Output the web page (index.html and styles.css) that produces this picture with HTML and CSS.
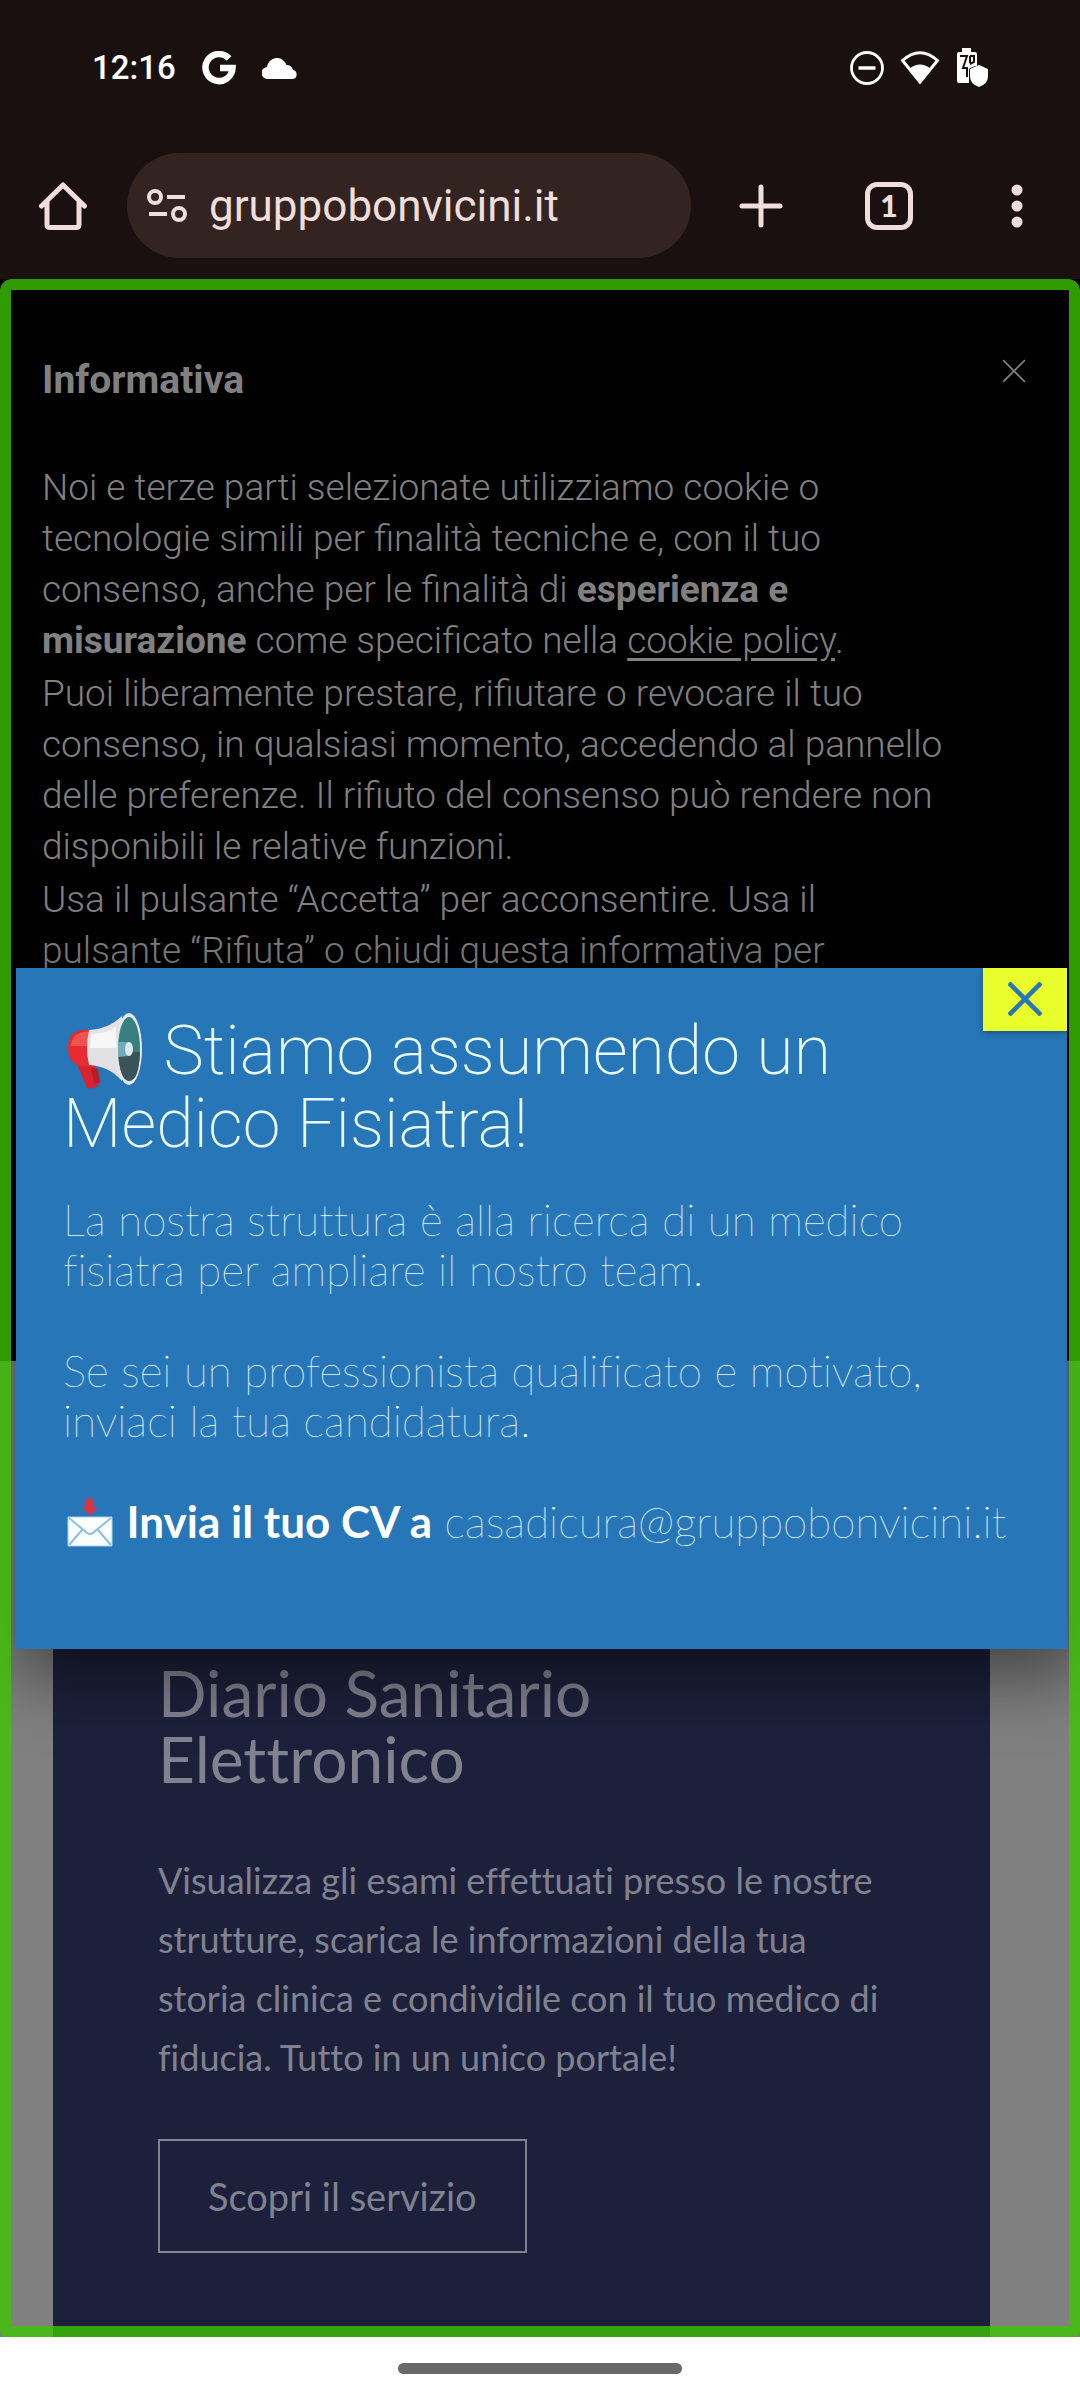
FILE: index.html
```
<!DOCTYPE html>
<html lang="it">
<head>
<meta charset="utf-8">
<meta name="viewport" content="width=device-width, initial-scale=1">
<title>Gruppo Bonvicini</title>
<link rel="stylesheet" href="styles.css">
</head>
<body>
<div class="phone">
  <header class="chrome">
    <div class="status">
      <div class="status-group">
        <time class="clock">12:16</time>
        <svg class="icon-g" viewBox="0 0 34 34" aria-hidden="true"><path d="M27 7.500A13.500 13.500 0 1 0 30.500 17H18" fill="none" stroke="#fff" stroke-width="6.500"/></svg>
        <svg class="icon-cloud" viewBox="0 0 36 21" aria-hidden="true"><path d="M6 21a6 6 0 0 1-1-12A10 10 0 0 1 24.500 7 7 7 0 0 1 31 12a4.600 4.600 0 0 1 0 9z" fill="#fff"/></svg>
      </div>
      <div class="status-group status-right">
        <svg class="icon-dnd" viewBox="0 0 34 34" aria-hidden="true"><circle cx="17" cy="17" r="15.500" fill="none" stroke="#fff" stroke-width="2.800"/><path d="M8.500 17h17" stroke="#fff" stroke-width="3.500"/></svg>
        <svg class="icon-wifi" viewBox="0 0 40 34" aria-hidden="true"><path d="M2.500 9.500Q20-6 37.500 9.500L20 31z" fill="none" stroke="#fff" stroke-width="3"/><path d="M9.500 17.500q10.500-8 21 0L20 32z" fill="#fff"/></svg>
        <svg class="icon-battery" viewBox="0 0 32 40" aria-hidden="true"><path d="M6 0h9v4h4q2 0 2 2v12c-3 0-7 2-8 3v14H3q-2 0-2-2V6q0-2 2-2h3z" fill="#fff"/><path d="M4 8h7L7 20h4v9M14 8v7M14 8h4v6l-4 2" fill="none" stroke="#1a100f" stroke-width="2"/><path d="M23 17l9 4v7q0 8-9 11-9-3-9-11v-7z" fill="#fff"/></svg>
      </div>
    </div>
    <div class="toolbar">
      <button class="tool" type="button" aria-label="Home"><svg class="icon-home" viewBox="0 0 48 50"><path d="M2.500 25L24 4l21.500 21M8 21v22.500q0 3 3 3h26q3 0 3-3V21" fill="none" stroke="#f0dedc" stroke-width="5" stroke-linecap="round" stroke-linejoin="round"/></svg></button>
      <div class="address">
        <svg class="icon-tune" viewBox="0 0 40 34" aria-hidden="true"><g fill="none" stroke="#f0dedc" stroke-width="4"><circle cx="8" cy="8" r="6"/><circle cx="32" cy="25" r="6"/><path d="M20 8h18M2 25h18"/></g></svg>
        <input class="url" type="text" aria-label="Indirizzo" value="gruppobonvicini.it">
      </div>
      <div class="tools">
        <button class="tool" type="button" aria-label="Nuova scheda"><svg class="icon-plus" viewBox="0 0 44 44"><path d="M22 3v38M3 22h38" fill="none" stroke="#f0dedc" stroke-width="5" stroke-linecap="round"/></svg></button>
        <button class="tool" type="button" aria-label="Schede aperte: 1"><span class="tabs">1</span></button>
        <button class="tool" type="button" aria-label="Menu"><svg class="icon-dots" viewBox="0 0 12 44"><g fill="#f0dedc"><circle cx="6" cy="6" r="5.500"/><circle cx="6" cy="22" r="5.500"/><circle cx="6" cy="38" r="5.500"/></g></svg></button>
      </div>
    </div>
  </header>

  <main class="viewport">
    <section class="card">
      <h2 class="card-title">Diario Sanitario<br>Elettronico</h2>
      <p class="card-text">Visualizza gli esami effettuati presso le nostre<br>strutture, scarica le informazioni della tua<br>storia clinica e condividile con il tuo medico di<br>fiducia. Tutto in un unico portale!</p>
      <button class="card-button" type="button">Scopri il servizio</button>
    </section>

    <section class="cookies">
      <div class="cookies-head">
        <h2 class="cookies-title">Informativa</h2>
        <button class="cookies-close" type="button" aria-label="Chiudi informativa"><svg viewBox="0 0 22 22"><path d="M1 1l20 20M21 1L1 21" stroke="#808080" stroke-width="1.500"/></svg></button>
      </div>
      <div class="cookies-text">
        <p>Noi e terze parti selezionate utilizziamo cookie o<br>tecnologie simili per finalità tecniche e, con il tuo<br>consenso, anche per le finalità di <strong>esperienza e<br>misurazione</strong> come specificato nella <a href="#">cookie policy</a>.</p>
        <p>Puoi liberamente prestare, rifiutare o revocare il tuo<br>consenso, in qualsiasi momento, accedendo al pannello<br>delle preferenze. Il rifiuto del consenso può rendere non<br>disponibili le relative funzioni.</p>
        <p>Usa il pulsante “Accetta” per acconsentire. Usa il<br>pulsante “Rifiuta” o chiudi questa informativa per</p>
      </div>
    </section>

    <div class="overlay">
      <div class="popup" role="dialog" aria-labelledby="popup-title">
        <button class="popup-close" type="button" aria-label="Chiudi"><svg viewBox="0 0 34 34"><path d="M1 1l32 32M33 1L1 33" stroke="#2776b8" stroke-width="4.500"/></svg></button>
        <h1 class="popup-title" id="popup-title"><svg class="icon-megaphone" viewBox="0 0 76 78" aria-hidden="true">
          <path d="M10 52l17-1 6 20q-5 7-13 5z" fill="#d9232e"/>
          <path d="M24 55l7 2 2 13-6 2z" fill="#b91d28"/>
          <path d="M23 18Q1 16 1 36t22 18z" fill="#e62b32"/>
          <path d="M7 25q6-6 16-5v14H4q0-5 3-9z" fill="#f0534f"/>
          <path d="M22 18Q42 17 55 4v65Q42 54 22 53q-4-17 0-35z" fill="#e3e1e3"/>
          <path d="M24 22q16 0 25-8v22H23z" fill="#f8f7f8"/>
          <ellipse cx="62" cy="37" rx="13" ry="36" fill="#e4e7ef"/>
          <ellipse cx="62" cy="37" rx="11" ry="32" fill="#37807f"/>
          <path d="M51 40h22q-1 29-11 29-9 0-11-29z" fill="#3a5358"/>
          <path d="M51 30h11v14l-11 1z" fill="#72aab7"/>
          <ellipse cx="62" cy="37" rx="4" ry="7" fill="#dfe8ee"/>
        </svg> Stiamo assumendo un<br>Medico Fisiatra!</h1>
        <div class="popup-text">
          <p>La nostra struttura è alla ricerca di un medico<br>fisiatra per ampliare il nostro team.</p>
          <p>Se sei un professionista qualificato e motivato,<br>inviaci la tua candidatura.</p>
          <p><svg class="icon-mail" viewBox="0 0 46 48" aria-hidden="true"><path d="M18 0h9v8h4l-8 9-8-9h3z" fill="#d93243"/><path d="M1 18h44v29H1z" fill="#fbfeff" stroke="#a4d0ea" stroke-width="1"/><path d="M2 19l17 14q4 4 8 0l17-14M2 46l13-15M44 46L31 31" fill="none" stroke="#8fbfe0" stroke-width="2"/></svg> <strong>Invia il tuo CV a</strong> <a href="mailto:casadicura@gruppobonvicini.it">casadicura@gruppobonvicini.it</a></p>
        </div>
      </div>
    </div>
    <div class="frame"></div>
  </main>

  <footer class="gesture"><div class="handle"></div></footer>
</div>
</body>
</html>
```
FILE: styles.css
```
* { box-sizing: border-box; }
body { margin: 0; background: #fff; font-family: Roboto, sans-serif; }
h1, h2, p { margin: 0; }
button { margin: 0; padding: 0; border: 0; background: none; font: inherit; color: inherit; }
svg { display: block; }

.phone { display: flex; flex-direction: column; min-height: 100vh; }

.chrome { background: #1a100f; color: #f0dedc; }
.status { display: flex; justify-content: space-between; align-items: center; height: 136px; padding: 0 92px; color: #fff; }
.status-group { display: flex; align-items: center; gap: 26px; }
.status-right { gap: 16px; }
.clock { font-size: 33px; font-weight: 500; line-height: 40px; }
.icon-g { width: 34px; height: 34px; }
.icon-cloud { width: 36px; height: 21px; }
.icon-dnd { width: 34px; height: 34px; }
.icon-wifi { width: 40px; height: 34px; }
.icon-battery { width: 32px; height: 40px; }

.toolbar { display: flex; align-items: center; height: 143px; padding: 0 23px 4px; }
.tools { display: flex; flex: none; gap: 48px; }
.tool { display: grid; place-items: center; flex: none; width: 80px; height: 80px; }
.icon-home { width: 48px; height: 50px; }
.address { display: flex; align-items: center; flex: 1; gap: 22px; min-width: 0; height: 105px; margin: 0 30px 0 24px; padding: 0 20px; border-radius: 53px; background: #332422; }
.icon-tune { width: 40px; height: 34px; flex: none; }
.url { flex: 1; min-width: 0; border: 0; padding: 0; background: none; color: #f0dedc; font-family: Roboto, sans-serif; font-size: 44px; line-height: 50px; }
.icon-plus { width: 44px; height: 44px; }
.tabs { width: 48px; height: 48px; border: 5px solid #f0dedc; border-radius: 12px; font-family: Lato, sans-serif; font-size: 30px; font-weight: 900; line-height: 37px; text-align: center; }
.icon-dots { width: 12px; height: 44px; }

.viewport { position: relative; display: flex; flex-direction: column; flex: 1; overflow: hidden; background: #808080; }
.card { display: flex; flex-direction: column; align-items: flex-start; justify-content: flex-end; flex: 1; margin: 0 90px 0 53px; padding: 64px 105px 84px; background: #1d203b; color: #80828f; font-family: Lato, sans-serif; font-variant-ligatures: none; }
.card-title { font-size: 64px; font-weight: 400; line-height: 66px; }
.card-text { margin: 59px 0 52px; font-size: 36px; line-height: 59px; }
.card-button { height: 114px; padding: 0 48px; border: 2px solid #80828f; font-size: 38px; line-height: 40px; }

.cookies { position: absolute; top: 0; left: 0; right: 0; height: 1082px; padding: 76px 42px 0; background: #000; color: #808080; }
.cookies-head { display: flex; justify-content: space-between; align-items: flex-start; }
.cookies-title { font-size: 39px; font-weight: 700; line-height: 51px; }
.cookies-close { width: 24px; height: 31px; margin-right: 12px; }
.cookies-text { display: grid; gap: 2px; padding-top: 56px; font-size: 37px; font-weight: 300; line-height: 51px; }
.cookies-text strong { font-weight: 700; }
.cookies-text a { color: inherit; text-decoration: underline; text-underline-offset: 5px; }

.overlay { position: absolute; inset: 0; display: grid; align-items: center; padding: 0 13px 0 16px; }
.popup { position: relative; padding: 47px 47px 102px; background: #2776b8; color: #e9fbff; box-shadow: 6px 22px 63px 8px rgba(0, 0, 0, 0.45); }
.popup-close { position: absolute; top: 0; right: 0; display: grid; place-items: center; width: 84px; height: 63px; background: #e9ff2b; box-shadow: 0 2px 6px rgba(0, 0, 0, 0.3); }
.popup-close svg { width: 34px; height: 34px; }
.popup-title { font-size: 68px; font-weight: 200; line-height: 73px; }
.icon-megaphone { display: inline-block; width: 76px; height: 78px; margin: -20px 4px -16px 4px; vertical-align: 0; }
.popup-text { display: grid; gap: 51px; padding-top: 33px; color: #fff; font-family: Lato, sans-serif; font-size: 44px; font-weight: 200; line-height: 50px; font-variant-ligatures: none; text-shadow: 0 0 1px #c8f0ff; }
.popup-text strong { font-weight: 700; text-shadow: none; }
.popup-text a { color: inherit; text-decoration: none; }
.icon-mail { display: inline-block; width: 46px; height: 48px; margin: 0 1px 0 4px; vertical-align: -9px; }

.frame { position: absolute; inset: 0; border: 11px solid rgba(62, 198, 0, 0.78); border-radius: 12px 12px 6px 6px; pointer-events: none; }

.gesture { display: grid; place-items: center; height: 63px; background: #fff; }
.handle { width: 284px; height: 11px; border-radius: 6px; background: #696969; }
```
